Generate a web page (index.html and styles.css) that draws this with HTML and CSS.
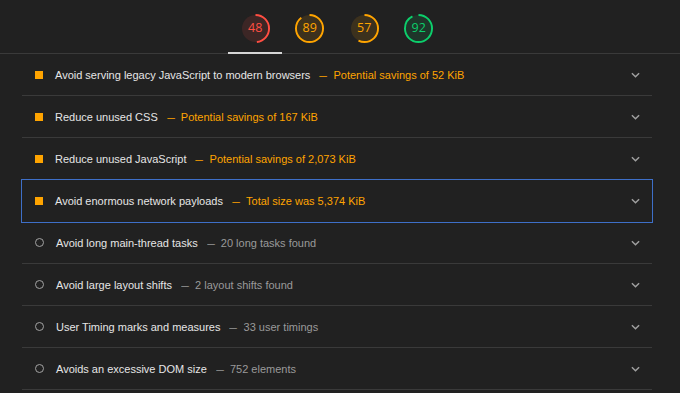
FILE: index.html
```html
<!DOCTYPE html>
<html>
<head>
<meta charset="utf-8">
<link rel="stylesheet" href="styles.css">
</head>
<body>
<div class="page">
  <header class="tabs">
    <div class="gauges">
      <div class="gauge gauge--fail active">
        <svg viewBox="0 0 120 120" class="ring"><circle class="base" cx="60" cy="60" r="56"/><circle class="arc" cx="60" cy="60" r="56" style="stroke-dasharray: 168.9 351.9"/></svg>
        <span class="num">48</span>
      </div>
      <div class="gauge gauge--avg">
        <svg viewBox="0 0 120 120" class="ring"><circle class="base" cx="60" cy="60" r="56"/><circle class="arc" cx="60" cy="60" r="56" style="stroke-dasharray: 313.2 351.9"/></svg>
        <span class="num">89</span>
      </div>
      <div class="gauge gauge--avg">
        <svg viewBox="0 0 120 120" class="ring"><circle class="base" cx="60" cy="60" r="56"/><circle class="arc" cx="60" cy="60" r="56" style="stroke-dasharray: 200.6 351.9"/></svg>
        <span class="num">57</span>
      </div>
      <div class="gauge gauge--pass">
        <svg viewBox="0 0 120 120" class="ring"><circle class="base" cx="60" cy="60" r="56"/><circle class="arc" cx="60" cy="60" r="56" style="stroke-dasharray: 323.7 351.9"/></svg>
        <span class="num">92</span>
      </div>
    </div>
  </header>

  <ul class="audits">
    <li class="audit audit--avg">
      <span class="icon"></span>
      <span class="title">Avoid serving legacy JavaScript to modern browsers</span>
      <span class="sep">–</span>
      <span class="display">Potential savings of 52 KiB</span>
      <svg class="chev" viewBox="0 0 10 6"><polyline points="1,1 5,5 9,1"/></svg>
    </li>
    <li class="audit audit--avg">
      <span class="icon"></span>
      <span class="title">Reduce unused CSS</span>
      <span class="sep">–</span>
      <span class="display">Potential savings of 167 KiB</span>
      <svg class="chev" viewBox="0 0 10 6"><polyline points="1,1 5,5 9,1"/></svg>
    </li>
    <li class="audit audit--avg">
      <span class="icon"></span>
      <span class="title">Reduce unused JavaScript</span>
      <span class="sep">–</span>
      <span class="display">Potential savings of 2,073 KiB</span>
      <svg class="chev" viewBox="0 0 10 6"><polyline points="1,1 5,5 9,1"/></svg>
    </li>
    <li class="audit audit--avg focused">
      <span class="icon"></span>
      <span class="title">Avoid enormous network payloads</span>
      <span class="sep">–</span>
      <span class="display">Total size was 5,374 KiB</span>
      <svg class="chev" viewBox="0 0 10 6"><polyline points="1,1 5,5 9,1"/></svg>
    </li>
    <li class="audit audit--info">
      <span class="icon"></span>
      <span class="title">Avoid long main-thread tasks</span>
      <span class="sep">–</span>
      <span class="display">20 long tasks found</span>
      <svg class="chev" viewBox="0 0 10 6"><polyline points="1,1 5,5 9,1"/></svg>
    </li>
    <li class="audit audit--info">
      <span class="icon"></span>
      <span class="title">Avoid large layout shifts</span>
      <span class="sep">–</span>
      <span class="display">2 layout shifts found</span>
      <svg class="chev" viewBox="0 0 10 6"><polyline points="1,1 5,5 9,1"/></svg>
    </li>
    <li class="audit audit--info">
      <span class="icon"></span>
      <span class="title">User Timing marks and measures</span>
      <span class="sep">–</span>
      <span class="display">33 user timings</span>
      <svg class="chev" viewBox="0 0 10 6"><polyline points="1,1 5,5 9,1"/></svg>
    </li>
    <li class="audit audit--info">
      <span class="icon"></span>
      <span class="title">Avoids an excessive DOM size</span>
      <span class="sep">–</span>
      <span class="display">752 elements</span>
      <svg class="chev" viewBox="0 0 10 6"><polyline points="1,1 5,5 9,1"/></svg>
    </li>
  </ul>
</div>
</body>
</html>
```

FILE: styles.css
```css
* { box-sizing: border-box; }
html, body {
  margin: 0;
  padding: 0;
  background: #212121;
  height: 100%;
  overflow: hidden;
}
body {
  font-family: "Liberation Sans", Arial, sans-serif;
  color: #e3e3e3;
}
.page {
  display: flex;
  flex-direction: column;
}
.tabs {
  height: 54px;
  border-bottom: 1px solid #3a3a3a;
  display: flex;
  justify-content: center;
}
.gauges {
  display: flex;
  gap: 0.5px;
  margin-right: 6px;
}
.gauge {
  position: relative;
  width: 54px;
  height: 53px;
  display: flex;
  align-items: center;
  justify-content: center;
}
.gauge.active::after {
  content: "";
  position: absolute;
  left: 0;
  right: 0;
  bottom: -1px;
  height: 2px;
  background: #d6d6d6;
}
.ring {
  position: absolute;
  width: 29px;
  height: 29px;
  left: 12.5px;
  top: 13.5px;
  transform: rotate(-90deg);
}
.ring circle { stroke-width: 8; }
.ring .base { stroke: none; }
.ring .arc { fill: none; stroke-linecap: butt; }
.num {
  position: relative;
  font-family: "Open Sans", "Liberation Sans", sans-serif;
  font-size: 12.5px;
  margin-top: 1px;
}
.gauge--fail .base { fill: rgba(255, 78, 66, 0.12); }
.gauge--fail .arc { stroke: #ff4e42; }
.gauge--fail .num { color: #ff4e42; }
.gauge--avg .base { fill: rgba(255, 164, 0, 0.12); }
.gauge--avg .arc { stroke: #ffa400; }
.gauge--avg .num { color: #ffa400; }
.gauge--pass .base { fill: rgba(12, 206, 107, 0.12); }
.gauge--pass .arc { stroke: #0cce6b; }
.gauge--pass .num { color: #0cce6b; }

.audits {
  list-style: none;
  margin: 0 0 0 22px;
  padding: 0;
  width: 630px;
}
.audit {
  height: 42px;
  border-bottom: 1px solid #3a3a3a;
  display: flex;
  align-items: center;
  padding: 0 12px 0 12px;
  font-size: 11px;
  position: relative;
}
.audit.focused {
  outline: 1px solid #3e6fc8;
  border-bottom-color: transparent;
}
.icon {
  width: 9px;
  height: 9px;
  margin-right: 12px;
  flex: none;
  display: flex;
  align-items: center;
  justify-content: center;
}
.audit--avg .icon::before {
  content: "";
  width: 8px;
  height: 8px;
  background: #ffa400;
}
.audit--info .icon {
  border: 1.75px solid #a3a3a3;
  border-radius: 50%;
  margin-left: 0.5px;
  margin-right: 12.5px;
}
.title { color: #e6e6e6; }
.sep {
  margin: 0 7px 0 10px;
  transform: scaleX(1.25);
}
.audit--avg .sep, .audit--avg .display { color: #ffa400; }
.audit--info .sep, .audit--info .display { color: #9a9a9a; }
.chev {
  margin-left: auto;
  width: 9px;
  height: 6px;
  fill: none;
  stroke: #a0a0a0;
  stroke-width: 1.6;
}
```
